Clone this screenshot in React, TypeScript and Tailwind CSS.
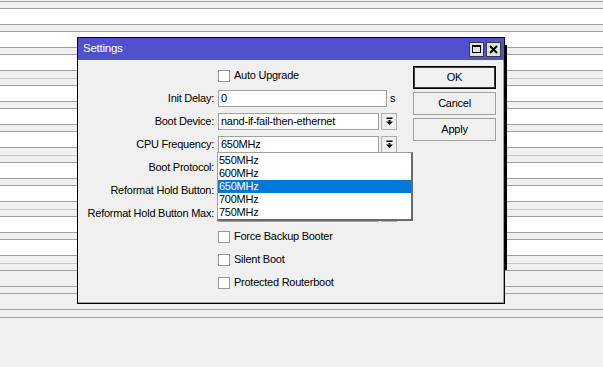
import React from "react";

type Seg = "line" | "light" | "strip1" | "strip6" | "strip7" | "white" | "gray";

const segClass: Record<Seg, string> = {
  line: "h-px bg-[#a0a0a0]",
  light: "h-px bg-[#c6c6c6]",
  strip1: "h-px bg-[#f0f0f0]",
  strip6: "h-[6px] bg-[#f0f0f0]",
  strip7: "h-[7px] bg-[#f0f0f0]",
  white: "h-[15px] bg-white",
  gray: "h-[15px] bg-[#f0f0f0]",
};

// background list rows behind the dialog
const rows: Seg[] = [
  "strip1", "line", "strip6", "line",
  "white", "line", "strip6", "line",
  "white", "line", "strip6", "line",
  "white", "line", "strip7", "light", "strip6", "line",
  "white", "line", "strip6", "line",
  "white", "line", "strip6", "line",
  "white", "line", "strip7", "light", "strip6", "line",
  "white", "line", "strip6", "line",
  "white", "line", "strip7", "light", "strip6", "line",
  "white", "line", "strip6", "line",
  "white", "line", "strip7", "light", "strip6", "line",
  "gray", "line", "strip6", "line",
  "gray", "line", "strip7", "line",
];

const freqs = ["550MHz", "600MHz", "650MHz", "700MHz", "750MHz"];

function DropIcon() {
  return (
    <svg width="9" height="9" viewBox="0 0 9 9">
      <rect x="1.5" y="0.5" width="6" height="1.5" fill="#000" />
      <rect x="3.5" y="3" width="2" height="1.5" fill="#000" />
      <path d="M1 4.5 H8 L4.5 8 Z" fill="#000" />
    </svg>
  );
}

function Checkbox({ label }: { label: string }) {
  return (
    <div className="h-[23px] flex items-center">
      <div className="w-[136px]" />
      <div className="ml-[4px] w-[12px] h-[12px] bg-white border border-[#999999]" />
      <span className="ml-[4px]">{label}</span>
    </div>
  );
}

function Label({ text }: { text: string }) {
  return <div className="w-[136px] text-right whitespace-nowrap">{text}</div>;
}

function Combo({ label, value }: { label: string; value?: string }) {
  return (
    <div className="h-[23px] flex items-center">
      <Label text={label} />
      <div className="ml-[4px] w-[161px] h-[17px] bg-white border border-[#a0a0a0] flex items-center pl-[2px] whitespace-nowrap overflow-hidden">
        {value}
      </div>
      <div className="ml-[2px] w-[16px] h-[17px] bg-[#f0f0f0] border border-[#adadad] flex items-center justify-center">
        <DropIcon />
      </div>
    </div>
  );
}

function Button({ text, primary }: { text: string; primary?: boolean }) {
  return (
    <div
      className={
        primary
          ? "h-[23px] flex items-center justify-center border border-black shadow-[inset_0_0_0_1px_#3c3c3c] bg-[#f0f0f0]"
          : "h-[23px] flex items-center justify-center border border-[#a0a0a0] bg-[#f0f0f0]"
      }
    >
      {text}
    </div>
  );
}

export default function App() {
  return (
    <div className="relative w-[603px] h-[367px] overflow-hidden bg-[#f0f0f0] font-['Liberation_Sans',Arial,sans-serif] text-[11px] leading-none tracking-[-0.25px] text-black">
      <div className="flex flex-col">
        {rows.map((r, i) => (
          <div key={i} className={segClass[r]} />
        ))}
      </div>

      {/* edge of a window behind */}
      <div className="absolute left-[505px] top-[45px] w-[2px] h-[225px] bg-black" />

      <div className="absolute left-[77px] top-[37px] w-[428px] h-[267px] border border-black bg-[#f0f0f0] shadow-[inset_-1px_-1px_0_#a0a0a0] flex flex-col">
        <div className="h-[22px] bg-[#5151cb] flex items-center pl-[5px] pr-[3px] text-white text-[11.5px]">
          <span>Settings</span>
          <div className="ml-auto flex gap-[2px]">
            <div className="w-[15px] h-[15px] bg-[#e1e1e1] border border-[#3a3a3a] flex items-center justify-center">
              <div className="w-[9px] h-[8px] border border-black border-t-2" />
            </div>
            <div className="w-[15px] h-[15px] bg-[#e1e1e1] border border-[#3a3a3a] flex items-center justify-center">
              <svg width="9" height="9" viewBox="0 0 9 9">
                <path d="M1 1 L8 8 M8 1 L1 8" stroke="#000" strokeWidth="2" />
              </svg>
            </div>
          </div>
        </div>

        <div className="flex pt-[4px]">
          <div className="flex-1 flex flex-col">
            <Checkbox label="Auto Upgrade" />
            <div className="h-[23px] flex items-center">
              <Label text="Init Delay:" />
              <div className="ml-[4px] w-[169px] h-[17px] bg-white border border-[#a0a0a0] flex items-center pl-[2px]">
                0
              </div>
              <span className="ml-[3px]">s</span>
            </div>
            <Combo label="Boot Device:" value="nand-if-fail-then-ethernet" />
            <Combo label="CPU Frequency:" value="650MHz" />
            <Combo label="Boot Protocol:" />
            <Combo label="Reformat Hold Button:" />
            <Combo label="Reformat Hold Button Max:" />
            <Checkbox label="Force Backup Booter" />
            <Checkbox label="Silent Boot" />
            <Checkbox label="Protected Routerboot" />
          </div>
          <div className="w-[83px] mr-[8px] mt-[2px] flex flex-col gap-[3px]">
            <Button text="OK" primary />
            <Button text="Cancel" />
            <Button text="Apply" />
          </div>
        </div>

        {/* open CPU frequency list */}
        <div className="absolute left-[139px] top-[114px] w-[196px] h-[69px] bg-white border-l border-t border-[#a0a0a0] border-r-2 border-b-2 border-r-[#6a6a6a] border-b-[#6a6a6a] pt-px">
          {freqs.map((f) => (
            <div
              key={f}
              className={
                f === "650MHz"
                  ? "h-[13px] flex items-center pl-[1px] bg-[#0078d7] text-white"
                  : "h-[13px] flex items-center pl-[1px]"
              }
            >
              {f}
            </div>
          ))}
        </div>
      </div>
    </div>
  );
}
